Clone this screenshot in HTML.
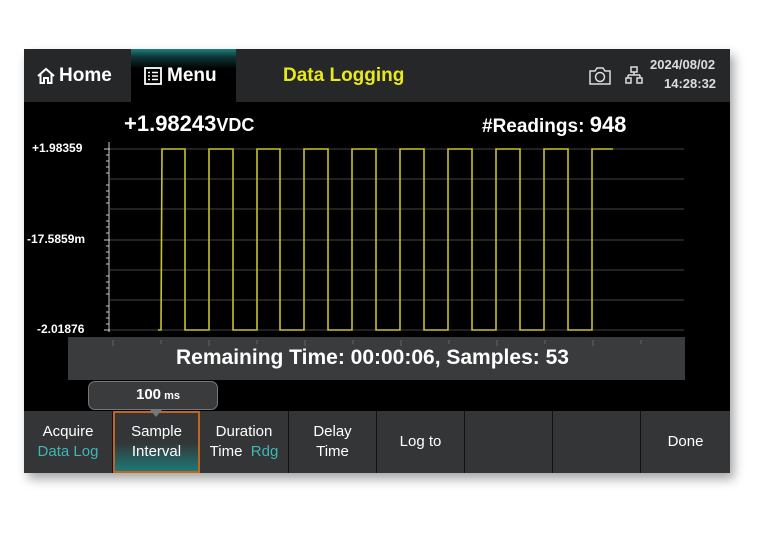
<!DOCTYPE html>
<html><head><meta charset="utf-8"><style>
*{margin:0;padding:0;box-sizing:border-box}
body{width:768px;height:543px;background:#fff;font-family:"Liberation Sans",sans-serif;position:relative;overflow:hidden}
.scr{position:absolute;left:24px;top:49px;width:706px;height:424px;background:#000;box-shadow:4px 6px 10px rgba(0,0,0,.35)}
.hdr{position:absolute;left:0;top:0;width:706px;height:53px;background:#262728}
.t{position:absolute;color:#fff;font-weight:bold;white-space:nowrap}
.key{position:absolute;top:362px;height:62px;background:#333536;color:#fff;font-size:15px;text-align:center;display:flex;flex-direction:column;justify-content:center;line-height:20px;border-right:1px solid #111}
.c{color:#3fb7b7}
</style></head><body>
<div class="scr">
 <div class="hdr"></div>
 <div style="position:absolute;left:107px;top:0;width:105px;height:53px;background:linear-gradient(#1f7f7f 0,#0d3535 8px,#000 20px)"></div>
 <svg style="position:absolute;left:12px;top:17px" width="20" height="20" viewBox="0 0 20 20"><path d="M2 10 L10 3 L18 10 M4.5 8 V17 H8 V12 H12 V17 H15.5 V8" fill="none" stroke="#fff" stroke-width="2"/></svg>
 <div class="t" style="left:35px;top:16px;font-size:19px">Home</div>
 <svg style="position:absolute;left:120px;top:18px" width="18" height="18" viewBox="0 0 18 18"><rect x="1" y="1" width="16" height="16" fill="none" stroke="#fff" stroke-width="1.8"/><path d="M4 5.5h2M8 5.5h6M4 9h2M8 9h6M4 12.5h2M8 12.5h6" stroke="#fff" stroke-width="1.6"/></svg>
 <div class="t" style="left:143px;top:16px;font-size:19px">Menu</div>
 <div class="t" style="left:259px;top:16px;font-size:19px;color:#e8e81e">Data Logging</div>
 <svg style="position:absolute;left:564px;top:17px" width="24" height="20" viewBox="0 0 24 20"><path d="M2 5h5l2-3h6l2 3h5v13H2z" fill="none" stroke="#ddd" stroke-width="1.5"/><circle cx="12" cy="11" r="4.5" fill="none" stroke="#ddd" stroke-width="1.5"/></svg>
 <svg style="position:absolute;left:601px;top:17px" width="18" height="18" viewBox="0 0 18 18" fill="none" stroke="#ddd" stroke-width="1.5"><rect x="6" y="1" width="6" height="5"/><path d="M9 6v3M3 9h12M3 9v3M15 9v3"/><rect x="1" y="12" width="5" height="5"/><rect x="12" y="12" width="5" height="5"/></svg>
 <div class="t" style="left:626px;top:8px;font-size:13px;color:#ddd">2024/08/02</div>
 <div class="t" style="left:640px;top:27px;font-size:13px;color:#ddd">14:28:32</div>
 <div class="t" style="left:100px;top:62px;font-size:22px">+1.98243<span style="font-size:18px">VDC</span></div>
 <div class="t" style="left:458px;top:63px;font-size:19px">#Readings: <span style="font-size:22px">948</span></div>
 <div class="t" style="left:8px;top:92px;font-size:12px">+1.98359</div>
 <div class="t" style="left:3px;top:183px;font-size:12px">-17.5859m</div>
 <div class="t" style="left:13px;top:273px;font-size:12px">-2.01876</div>
 <svg style="position:absolute;left:0;top:0" width="706" height="424">
  <g stroke="#444" stroke-width="1">
   <path d="M86 100H660M86 130H660M86 160H660M86 191H660M86 221H660M86 251H660M86 281H660"/>
  </g>
  <path d="M85 93V283" stroke="#ccc" stroke-width="1"/>
  <path d="M80 100h6M80 191h6M80 281h6M82 106h3M82 112h3M82 118h3M82 124h3M82 136h3M82 142h3M82 148h3M82 154h3M82 166h3M82 172h3M82 178h3M82 184h3M82 197h3M82 203h3M82 209h3M82 215h3M82 227h3M82 233h3M82 239h3M82 245h3M82 257h3M82 263h3M82 269h3M82 275h3" stroke="#ccc"/>
  <path d="M134 281 L137 281 L138 100 H161 V281 H185 V100 H209 V281 H233 V100 H256 V281 H280 V100 H304 V281 H328 V100 H352 V281 H376 V100 H400 V281 H424 V100 H448 V281 H472 V100 H496 V281 H520 V100 H544 V281 H568 V100 H589" fill="none" stroke="#c8c32a" stroke-width="1.6"/>
 </svg>
 <div style="position:absolute;left:44px;top:288px;width:617px;height:43px;background:#3a3b3c"></div>
 <svg style="position:absolute;left:44px;top:288px" width="617" height="10"><path d="M45 3V9M93 3V7M141 3V9M189 3V7M237 3V9M285 3V7M333 3V9M381 3V7M429 3V9M477 3V7M525 3V9M573 3V7" stroke="#666"/></svg>
 <div class="t" style="left:152px;top:297px;font-size:21px">Remaining Time: 00:00:06, Samples: 53</div>
 <div style="position:absolute;left:64px;top:332px;width:130px;height:29px;background:#3a3b3c;border:1px solid #777;border-radius:7px"></div>
 <div class="t" style="left:112px;top:337px;font-size:15px">100<span style="font-size:11px"> ms</span></div>
 <div class="key" style="left:0;width:89px">Acquire<span class="c">Data Log</span></div>
 <div class="key" style="left:89px;width:87px;border:2px solid #c0661f;background:linear-gradient(#333536 50%,#1f7878)">Sample<span>Interval</span></div>
 <div style="position:absolute;left:126px;top:361px;width:0;height:0;border-left:6px solid transparent;border-right:6px solid transparent;border-top:7px solid #777"></div>
 <div class="key" style="left:176px;width:89px">Duration<span>Time&nbsp; <span class="c">Rdg</span></span></div>
 <div class="key" style="left:265px;width:88px">Delay<span>Time</span></div>
 <div class="key" style="left:353px;width:88px">Log to</div>
 <div class="key" style="left:441px;width:88px"></div>
 <div class="key" style="left:529px;width:88px"></div>
 <div class="key" style="left:617px;width:89px;border-right:0">Done</div>
</div>
</body></html>
